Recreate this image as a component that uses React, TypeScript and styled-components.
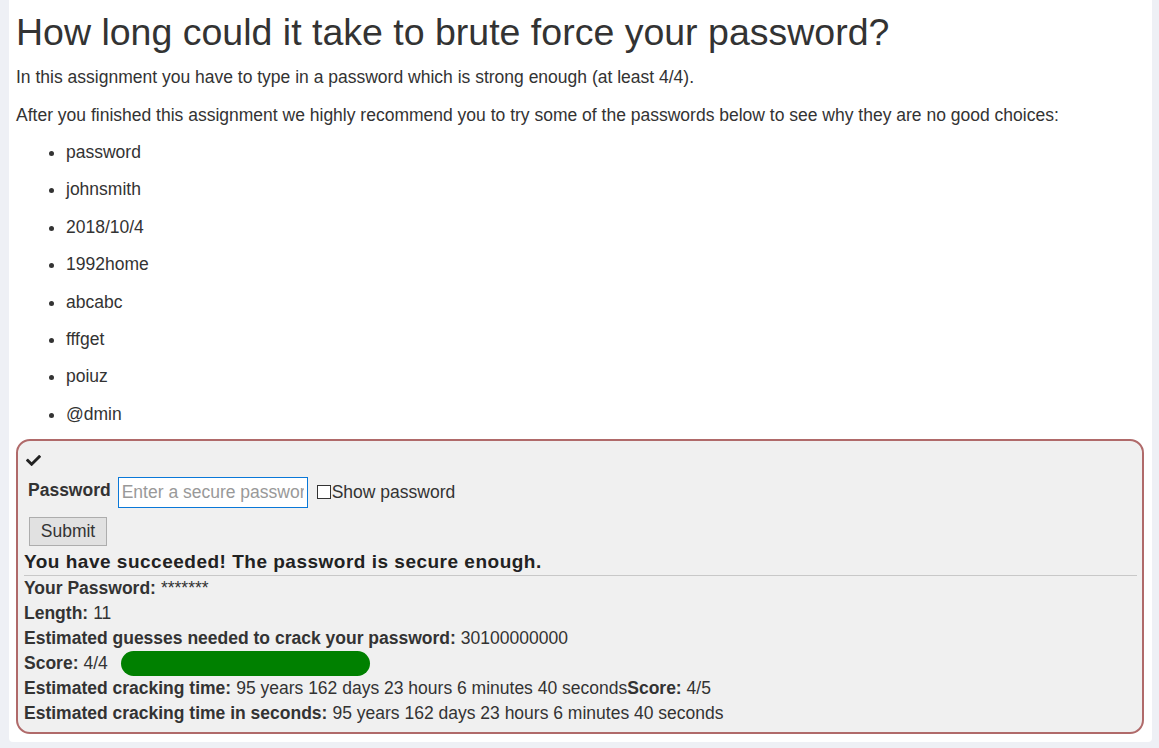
import React from "react";
import styled, { createGlobalStyle } from "styled-components";
import { FaCheck } from "react-icons/fa";

const Global = createGlobalStyle`
  html, body { margin: 0; padding: 0; background: #eef0f5; }
  body { font-family: "Liberation Sans", Arial, sans-serif; color: #333; }
  * { box-sizing: border-box; }
`;

const Page = styled.div`
  padding: 0 7px 7px 9px;
  height: 748px;
  overflow: hidden;
`;

const Panel = styled.div`
  background: #fff;
  border-radius: 0 0 4px 4px;
  padding: 8px 8px 8px 7px;
`;

const Title = styled.h1`
  margin: 0 0 10px;
  font-size: 37.5px;
  font-weight: 400;
  line-height: 48px;
  color: #333;
`;

const Para = styled.p`
  margin: 0 0 15.5px;
  font-size: 17.5px;
  line-height: 22px;
`;

const List = styled.ul`
  margin: 0;
  padding: 0 0 0 50px;
  list-style: disc;
`;

const Item = styled.li`
  font-size: 17.5px;
  line-height: 22px;
  margin-bottom: 15.4px;
  &:last-child { margin-bottom: 14px; }
`;

const Attack = styled.div`
  border: 2px solid #b06a6a;
  border-radius: 14px;
  background: #f0f0f0;
  padding: 12px 5px 6px 6px;
`;

const CheckRow = styled.div`
  height: 20px;
  padding-left: 2px;
  font-size: 15px;
  color: #222;
`;

const FormRow = styled.div`
  display: flex;
  align-items: center;
  gap: 7px;
  padding-left: 4px;
  margin-top: 4px;
`;

const Label = styled.label`
  font-weight: 700;
  font-size: 17.5px;
  margin-top: -4px;
`;

const Input = styled.input`
  width: 190px;
  height: 31px;
  border: 1px solid #0a78d8;
  padding: 0 3px;
  font-family: "Liberation Sans", Arial, sans-serif;
  font-size: 17.5px;
  background: #fff;
  &::placeholder { color: #999; }
`;

const CheckLabel = styled.label`
  display: flex;
  align-items: center;
  font-size: 17.5px;
  margin-left: 2px;
`;

const Box = styled.span`
  width: 14px;
  height: 14px;
  border: 1px solid #333;
  background: #fff;
  margin-right: 1px;
`;

const Submit = styled.button`
  margin: 9px 0 0 5px;
  width: 78px;
  height: 29px;
  background: #e1e1e1;
  border: 1px solid #adadad;
  font-family: "Liberation Sans", Arial, sans-serif;
  font-size: 17.5px;
  color: #333;
  padding: 0;
`;

const Success = styled.div`
  font-weight: 700;
  font-size: 19px;
  letter-spacing: 0.5px;
  line-height: 22px;
  color: #222;
  padding-bottom: 2px;
  border-bottom: 1px solid #c8c8c8;
  margin-top: 5px;
`;

const Info = styled.div`
  font-size: 17.5px;
  line-height: 25px;
  display: flex;
  align-items: center;
`;

const B = styled.b`
  font-weight: 700;
  margin-right: 5px;
`;

const Bar = styled.div`
  width: 249px;
  height: 25px;
  border-radius: 13px;
  background: #008000;
  margin-left: 13px;
`;

const items = ["password", "johnsmith", "2018/10/4", "1992home", "abcabc", "fffget", "poiuz", "@dmin"];

export default function App() {
  return (
    <Page>
      <Global />
      <Panel>
        <Title>How long could it take to brute force your password?</Title>
        <Para>In this assignment you have to type in a password which is strong enough (at least 4/4).</Para>
        <Para>After you finished this assignment we highly recommend you to try some of the passwords below to see why they are no good choices:</Para>
        <List>
          {items.map((i) => (
            <Item key={i}>{i}</Item>
          ))}
        </List>
        <Attack>
          <CheckRow><FaCheck /></CheckRow>
          <FormRow>
            <Label>Password</Label>
            <Input type="password" placeholder="Enter a secure password" />
            <CheckLabel><Box />Show password</CheckLabel>
          </FormRow>
          <Submit>Submit</Submit>
          <Success>You have succeeded! The password is secure enough.</Success>
          <Info><B>Your Password:</B>*******</Info>
          <Info><B>Length:</B>11</Info>
          <Info><B>Estimated guesses needed to crack your password:</B>30100000000</Info>
          <Info><B>Score:</B>4/4<Bar /></Info>
          <Info><B>Estimated cracking time:</B>95 years 162 days 23 hours 6 minutes 40 seconds<b>Score:</b>&nbsp;4/5</Info>
          <Info><B>Estimated cracking time in seconds:</B>95 years 162 days 23 hours 6 minutes 40 seconds</Info>
        </Attack>
      </Panel>
    </Page>
  );
}
